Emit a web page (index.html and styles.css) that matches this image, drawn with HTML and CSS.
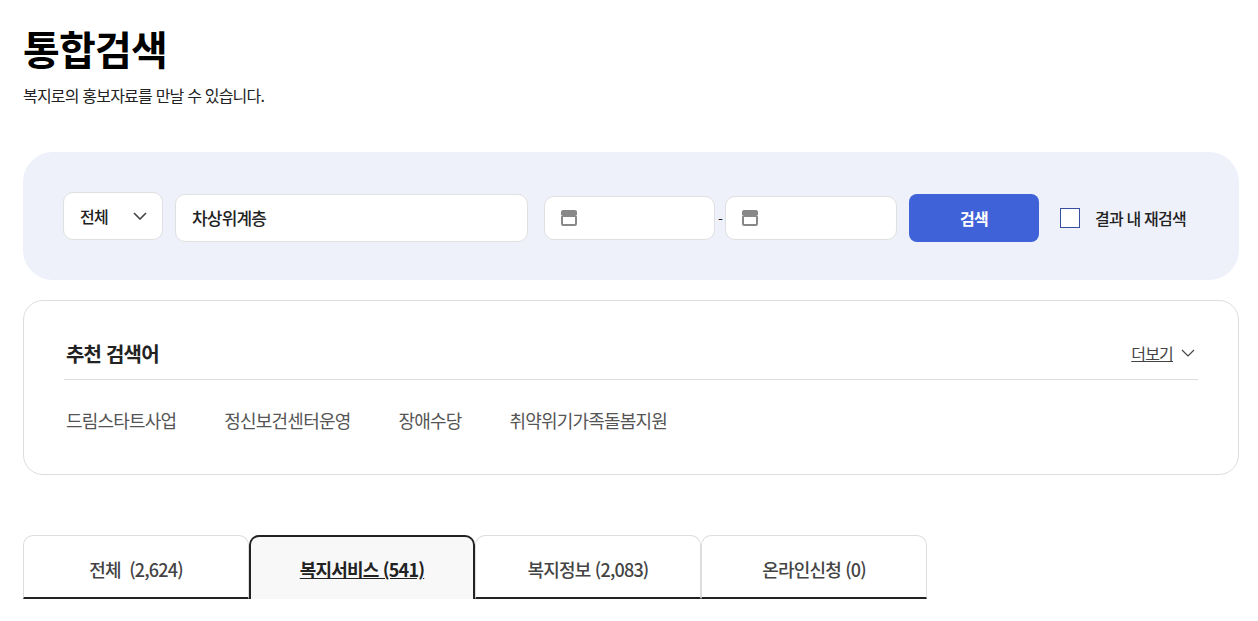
FILE: index.html
```html
<!DOCTYPE html>
<html lang="ko">
<head>
    <meta charset="UTF-8">
    <title>통합검색</title>
    <link rel="stylesheet" href="styles.css">
</head>
<body>

<div class="page">
    <div class="header">
        <h1>통합검색</h1>
        <p>복지로의 홍보자료를 만날 수 있습니다.</p>
    </div>

    <form class="search-box">
        <div class="select">
            <span>전체</span>
            <svg width="14" height="8" viewBox="0 0 14 8"><path d="M1 1l6 6 6-6" fill="none" stroke="#444" stroke-width="1.6"/></svg>
        </div>
        <div class="keyword">차상위계층</div>
        <div class="date">
            <svg width="16" height="16" viewBox="0 0 16 16"><path d="M0 2a2 2 0 0 1 2-2h12a2 2 0 0 1 2 2v3H0z" fill="#888"/><rect x="1" y="6" width="14" height="9" rx="1" fill="none" stroke="#888" stroke-width="2"/></svg>
        </div>
        <span class="dash">-</span>
        <div class="date date-end">
            <svg width="16" height="16" viewBox="0 0 16 16"><path d="M0 2a2 2 0 0 1 2-2h12a2 2 0 0 1 2 2v3H0z" fill="#888"/><rect x="1" y="6" width="14" height="9" rx="1" fill="none" stroke="#888" stroke-width="2"/></svg>
        </div>
        <div class="search-btn">검색</div>
        <label class="recheck"><span class="checkbox"></span>결과 내 재검색</label>
    </form>

    <div class="recommend">
        <div class="recommend-head">
            <h2>추천 검색어</h2>
            <div class="more">
                <a href="#">더보기</a>
                <svg width="14" height="8" viewBox="0 0 14 8"><path d="M1 1l6 6 6-6" fill="none" stroke="#444" stroke-width="1.2"/></svg>
            </div>
        </div>
        <div class="recommend-list">
            <a href="#">드림스타트사업</a>
            <a href="#">정신보건센터운영</a>
            <a href="#">장애수당</a>
            <a href="#">취약위기가족돌봄지원</a>
        </div>
    </div>

    <div class="tabs">
        <a class="tab" href="#">전체&nbsp; (2,624)</a>
        <a class="tab active" href="#">복지서비스 (541)</a>
        <a class="tab" href="#">복지정보 (2,083)</a>
        <a class="tab" href="#">온라인신청 (0)</a>
    </div>
</div>

</body>
</html>
```

FILE: styles.css
```css
body {
    margin: 0;
    font-family: "Noto Sans CJK KR", "Noto Sans", sans-serif;
    letter-spacing: -0.05em;
    color: #222;
    background-color: #fff;
}

a {
    color: inherit;
    text-decoration: none;
}

.page {
    width: 1216px;
    margin-left: 23px;
}

/* 상단 제목 */
.header {
    padding-top: 20px;
    height: 152px;
    box-sizing: border-box;
}

.header h1 {
    margin: 0 0 8px;
    font-size: 40px;
    line-height: 56px;
    font-weight: 700;
    color: #000;
}

.header p {
    margin: 0;
    font-size: 16px;
    line-height: 22px;
    color: #222;
}

/* 검색 영역 */
.search-box {
    display: flex;
    align-items: flex-start;
    height: 128px;
    box-sizing: border-box;
    padding: 40px;
    background-color: #eef1fa;
    border-radius: 30px;
}

.select,
.keyword,
.date {
    box-sizing: border-box;
    background-color: #fff;
    border: 1px solid #e0e0e0;
    border-radius: 10px;
}

.select {
    display: flex;
    align-items: center;
    justify-content: space-between;
    width: 100px;
    height: 48px;
    padding: 0 15px 0 16px;
    font-size: 16px;
    font-weight: 500;
}

.keyword {
    width: 353px;
    height: 48px;
    margin: 2px 0 0 12px;
    padding-left: 16px;
    font-size: 17px;
    font-weight: 500;
    line-height: 46px;
}

.date {
    display: flex;
    align-items: center;
    width: 171px;
    height: 44px;
    margin: 4px 0 0 16px;
    padding-left: 16px;
}

.date-end {
    width: 172px;
    margin-left: 0;
}

.dash {
    width: 10px;
    margin-top: 4px;
    font-size: 14px;
    line-height: 46px;
    text-align: center;
}

.search-btn {
    width: 130px;
    height: 48px;
    margin: 2px 0 0 12px;
    background-color: #3f62d9;
    border-radius: 8px;
    color: #fff;
    font-size: 16px;
    font-weight: 700;
    line-height: 48px;
    text-align: center;
}

.recheck {
    display: flex;
    align-items: center;
    height: 48px;
    margin: 2px 0 0 21px;
    font-size: 16px;
    font-weight: 500;
    white-space: nowrap;
}

.checkbox {
    width: 20px;
    height: 20px;
    box-sizing: border-box;
    margin-right: 15px;
    background-color: #fff;
    border: 1px solid #34509f;
}

/* 추천 검색어 */
.recommend {
    height: 175px;
    box-sizing: border-box;
    margin-top: 20px;
    padding: 26px 40px 0;
    border: 1px solid #ddd;
    border-radius: 20px;
}

.recommend-head {
    display: flex;
    align-items: center;
    justify-content: space-between;
    height: 53px;
    box-sizing: border-box;
    padding: 0 3px 0 2px;
    border-bottom: 1px solid #ddd;
}

.recommend-head h2 {
    margin: 0;
    font-size: 20px;
    font-weight: 700;
}

.more {
    display: flex;
    align-items: center;
    gap: 8px;
    font-size: 16px;
    color: #444;
}

.more a {
    text-decoration: underline;
}

.recommend-list {
    display: flex;
    gap: 48px;
    padding: 27px 2px 0;
    font-size: 18px;
    line-height: 26px;
    color: #555;
}

/* 탭 */
.tabs {
    display: flex;
    margin-top: 60px;
}

.tab {
    width: 226px;
    height: 64px;
    box-sizing: border-box;
    border: 1px solid #ddd;
    border-bottom: 2px solid #222;
    border-radius: 10px 10px 0 0;
    color: #444;
    font-size: 18px;
    font-weight: 500;
    line-height: 66px;
    text-align: center;
}

.tab.active {
    background-color: #f8f8f8;
    border: 2px solid #222;
    border-bottom: none;
    color: #222;
    font-weight: 700;
    line-height: 64px;
    text-decoration: underline;
}
```
